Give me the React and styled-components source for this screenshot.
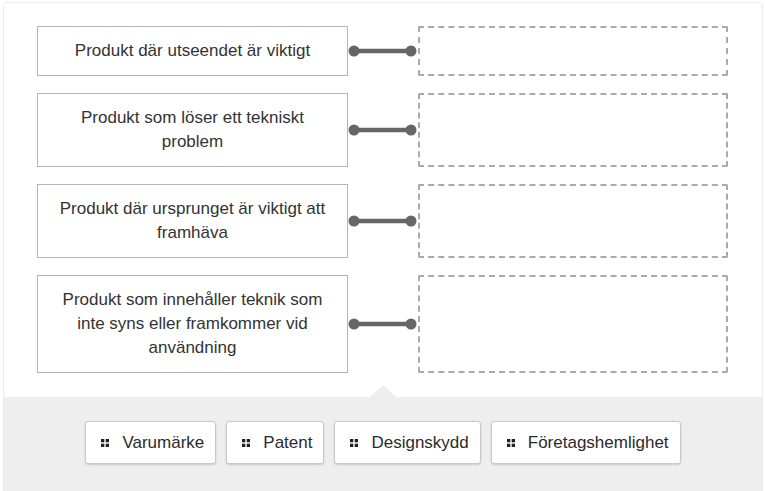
import React from "react";
import styled, { createGlobalStyle } from "styled-components";

const Global = createGlobalStyle`
  html, body { margin: 0; padding: 0; background: #fff; }
  body { font-family: Arial, "Liberation Sans", Helvetica, sans-serif; color: #333; }
  * { box-sizing: border-box; }
`;

const Card = styled.div`
  margin: 2px 2px 0 3px;
  border: 1px solid #ececec;
  border-radius: 4px;
  overflow: hidden;
  background: #fff;
`;

const Board = styled.div`
  display: grid;
  grid-template-columns: 311px 70px 310px;
  row-gap: 17px;
  padding: 23px 33px 24px;
`;

const Prompt = styled.div`
  border: 1px solid #b5b5b5;
  background: #fff;
  padding: 12px 17px;
  font-size: 17px;
  line-height: 24px;
  text-align: center;
  color: #333;
`;

const Link = styled.div`
  display: flex;
  align-items: center;
`;

const Slot = styled.div`
  border: 2px dashed #aaa;
  border-radius: 2px;
`;

const Tray = styled.div`
  position: relative;
  background: #eee;
  display: flex;
  justify-content: center;
  gap: 10px;
  padding: 24px 0 40px;
`;

const Pointer = styled.div`
  position: absolute;
  top: -12px;
  left: 50%;
  margin-left: -13px;
  width: 0;
  height: 0;
  border-left: 13px solid transparent;
  border-right: 13px solid transparent;
  border-bottom: 12px solid #eee;
`;

const Chip = styled.button`
  display: flex;
  align-items: center;
  gap: 13px;
  height: 43px;
  padding: 0 11px 0 15px;
  background: #fff;
  border: 1px solid #c8c8c8;
  border-radius: 3px;
  box-shadow: 0 1px 2px rgba(0, 0, 0, 0.15);
  font-family: Arial, "Liberation Sans", Helvetica, sans-serif;
  font-size: 17px;
  color: #2b2b2b;
  cursor: grab;
`;

const Grip = () => (
  <svg width="8" height="8" viewBox="0 0 8 8" aria-hidden="true">
    <rect x="0" y="0" width="3.3" height="3.3" fill="#222" />
    <rect x="4.7" y="0" width="3.3" height="3.3" fill="#222" />
    <rect x="0" y="4.7" width="3.3" height="3.3" fill="#222" />
    <rect x="4.7" y="4.7" width="3.3" height="3.3" fill="#222" />
  </svg>
);

const Connector = () => (
  <svg width="70" height="12" viewBox="0 0 70 12" aria-hidden="true">
    <line x1="6" y1="6" x2="63" y2="6" stroke="#666" strokeWidth="4.5" />
    <circle cx="6" cy="6" r="5.5" fill="#666" />
    <circle cx="63" cy="6" r="5.5" fill="#666" />
  </svg>
);

const prompts = [
  "Produkt där utseendet är viktigt",
  "Produkt som löser ett tekniskt problem",
  "Produkt där ursprunget är viktigt att framhäva",
  "Produkt som innehåller teknik som inte syns eller framkommer vid användning",
];

const answers = ["Varumärke", "Patent", "Designskydd", "Företagshemlighet"];

export default function App() {
  return (
    <>
      <Global />
      <Card>
        <Board>
          {prompts.map((p) => (
            <React.Fragment key={p}>
              <Prompt>{p}</Prompt>
              <Link>
                <Connector />
              </Link>
              <Slot />
            </React.Fragment>
          ))}
        </Board>
        <Tray>
          <Pointer />
          {answers.map((a) => (
            <Chip key={a}>
              <Grip />
              {a}
            </Chip>
          ))}
        </Tray>
      </Card>
    </>
  );
}
